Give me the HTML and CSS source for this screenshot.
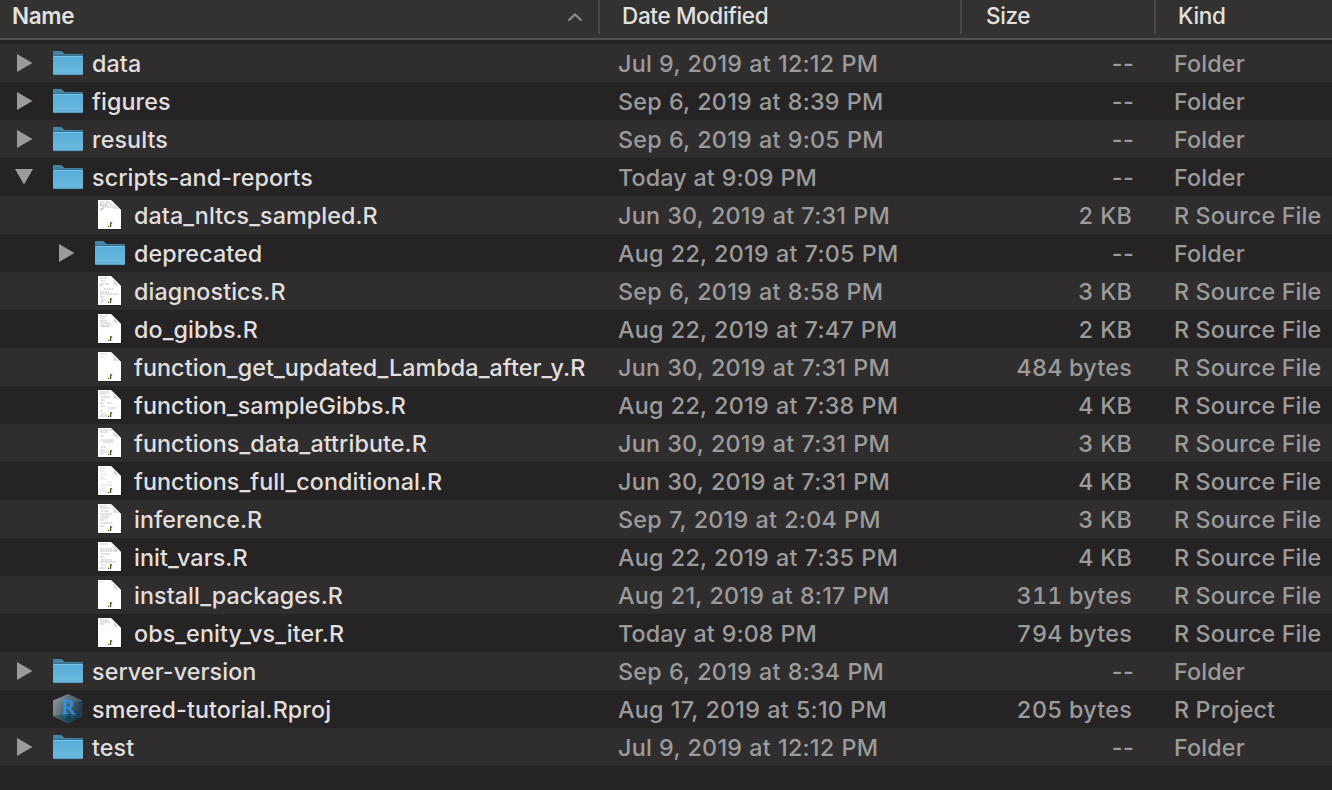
FILE: index.html
```
<!DOCTYPE html>
<html lang="en">
<head>
<meta charset="utf-8">
<title>Files</title>
<link rel="stylesheet" href="styles.css">
</head>
<body>
<svg class="defs" width="0" height="0" aria-hidden="true">
  <defs>
    <linearGradient id="front" x1="0" y1="0" x2="0" y2="1"><stop offset="0" stop-color="#56acd6"/><stop offset="1" stop-color="#6dbadf"/></linearGradient>
    <linearGradient id="fold" x1="0" y1="1" x2="1" y2="0"><stop offset="0" stop-color="#fff"/><stop offset=".35" stop-color="#d4d4d4"/><stop offset=".5" stop-color="#fafafa"/></linearGradient>
    <linearGradient id="cube" x1="0" y1="0" x2="1" y2=".35"><stop offset="0" stop-color="#929c9e"/><stop offset=".5" stop-color="#536972"/><stop offset="1" stop-color="#203e50"/></linearGradient>
    <linearGradient id="cubeBottom" x1="0" y1="0" x2="1" y2="0"><stop offset="0" stop-color="#59666b"/><stop offset=".5" stop-color="#174353"/><stop offset="1" stop-color="#233c49"/></linearGradient>
    <symbol id="right" viewBox="0 0 16 18"><path d="M0 0L15.500 9L0 18Z" fill="#9b9b9b"/></symbol>
    <symbol id="down" viewBox="0 0 18 16"><path d="M0 0H18L9 15.500Z" fill="#9b9b9b"/></symbol>
    <symbol id="folder" viewBox="0 0 32 26">
      <path d="M1 10V2Q1 1 2 1H8.500Q9.600 1 10.500 2L12 3.500Q12.600 4 13.500 4H30Q31 4 31 5V10Z" fill="#4685a5"/>
      <path d="M1 5.500H31V23.500Q31 25 29.500 25H2.500Q1 25 1 23.500Z" fill="url(#front)"/>
      <path d="M1 5.500H31" stroke="#356f8e"/>
      <path d="M1.500 6.500H30.500" stroke="#7bc5e8"/>
      <path d="M1.500 22.500H30.500" stroke="#60aed3" stroke-width=".7"/>
      <path d="M2 24.700H30" stroke="#42819f" stroke-width=".7"/>
    </symbol>
    <symbol id="page" viewBox="0 0 24 30">
      <path d="M.5 29.400H23.500" stroke="#111" stroke-opacity=".5"/>
      <path d="M0 0H13L23 10V29H0Z" fill="#fff"/>
      <path d="M13 0L23 10Q19 8 15.500 9Q16 4 13 0Z" fill="url(#fold)"/>
      <path d="M10 26.400H11.200M12.600 27V22.900H14.200" stroke="#55510a" fill="none" stroke-width="1.300"/>
    </symbol>
    <symbol id="rproj" viewBox="0 0 32 32">
      <path d="M16 1L30.500 7.500V23L16 30.500L1 23V7.500Z" fill="url(#cube)"/>
      <path d="M16 1L30.500 7.500L16 11L1 7.500Z" fill="#9aa6a8" fill-opacity=".2"/>
      <path d="M1 23L16 20.500L30.500 23L16 30.500Z" fill="url(#cubeBottom)"/>
      <path d="M11 22.500H15M20 22.500H23M13.500 22L12.500 25M18 22L21 25" stroke="#1e6c91" fill="none"/>
      <text x="10" y="20.800" class="cube-letter">R</text>
    </symbol>
  </defs>
</svg>
<div class="browser">
  <div class="header">
    <div class="h-name"><span>Name</span><svg class="sort" viewBox="0 0 16 10"><path d="M1.500 8.500L8 2.500L14.500 8.500" fill="none" stroke="#8c8b8a" stroke-width="2.300"/></svg></div>
    <div class="h-date">Date Modified</div>
    <div class="h-size">Size</div>
    <div class="h-kind">Kind</div>
  </div>
  <div class="list">
    <div class="row"><div class="name"><svg class="arrow"><use href="#right"/></svg><svg class="folder"><use href="#folder"/></svg><span>data</span></div><div class="date">Jul 9, 2019 at 12:12 PM</div><div class="size none">--</div><div class="kind">Folder</div></div>
    <div class="row"><div class="name"><svg class="arrow"><use href="#right"/></svg><svg class="folder"><use href="#folder"/></svg><span>figures</span></div><div class="date">Sep 6, 2019 at 8:39 PM</div><div class="size none">--</div><div class="kind">Folder</div></div>
    <div class="row"><div class="name"><svg class="arrow"><use href="#right"/></svg><svg class="folder"><use href="#folder"/></svg><span>results</span></div><div class="date">Sep 6, 2019 at 9:05 PM</div><div class="size none">--</div><div class="kind">Folder</div></div>
    <div class="row"><div class="name"><svg class="arrow open"><use href="#down"/></svg><svg class="folder"><use href="#folder"/></svg><span>scripts-and-reports</span></div><div class="date today">Today at 9:09 PM</div><div class="size none">--</div><div class="kind">Folder</div></div>
    <div class="row"><div class="name file"><svg class="page" viewBox="0 0 24 30"><use href="#page"/><path class="code" d="M2 2H7M8 2H12M2 4H14M2 5.500H9M4 7H15M3 8.500H6M2 10H5"/></svg><span>data_nltcs_sampled.R</span></div><div class="date">Jun 30, 2019 at 7:31 PM</div><div class="size">2 KB</div><div class="kind">R Source File</div></div>
    <div class="row"><div class="name nested"><svg class="arrow"><use href="#right"/></svg><svg class="folder"><use href="#folder"/></svg><span>deprecated</span></div><div class="date">Aug 22, 2019 at 7:05 PM</div><div class="size none">--</div><div class="kind">Folder</div></div>
    <div class="row"><div class="name file"><svg class="page" viewBox="0 0 24 30"><use href="#page"/><path class="code" d="M2 2H9M3 5H7M2 8H6M7 8H12M2 10H5M6 13H16M2 16H12M2 18H21M2 21H6M3 24H8M3 26H6"/></svg><span>diagnostics.R</span></div><div class="date">Sep 6, 2019 at 8:58 PM</div><div class="size">3 KB</div><div class="kind">R Source File</div></div>
    <div class="row"><div class="name file"><svg class="page" viewBox="0 0 24 30"><use href="#page"/><path class="code" d="M2 2H9M3 4H7M2 7H9M3 9H12M2 11H8M9 11H14M4 12.500H11"/></svg><span>do_gibbs.R</span></div><div class="date">Aug 22, 2019 at 7:47 PM</div><div class="size">2 KB</div><div class="kind">R Source File</div></div>
    <div class="row"><div class="name file"><svg class="page" viewBox="0 0 24 30"><use href="#page"/><path class="code faint" d="M2 2H9M2 5H6"/></svg><span>function_get_updated_Lambda_after_y.R</span></div><div class="date">Jun 30, 2019 at 7:31 PM</div><div class="size">484 bytes</div><div class="kind">R Source File</div></div>
    <div class="row"><div class="name file"><svg class="page" viewBox="0 0 24 30"><use href="#page"/><path class="code" d="M2 2H12M2 4H8M3 7H12M3 10H7M9 13H14M2 13H6M3 16H7M10 18H18M2 21H5M3 24H8M2 26H10"/></svg><span>function_sampleGibbs.R</span></div><div class="date">Aug 22, 2019 at 7:38 PM</div><div class="size">4 KB</div><div class="kind">R Source File</div></div>
    <div class="row"><div class="name file"><svg class="page" viewBox="0 0 24 30"><use href="#page"/><path class="code" d="M2 2H14M2 4H10M3 8H6M3 12H15M5 14H16M3 19H8M2 22H7M3 24H9M2 26H5"/></svg><span>functions_data_attribute.R</span></div><div class="date">Jun 30, 2019 at 7:31 PM</div><div class="size">3 KB</div><div class="kind">R Source File</div></div>
    <div class="row"><div class="name file"><svg class="page" viewBox="0 0 24 30"><use href="#page"/><path class="code faint" d="M2 2H8M2 5H7M3 8H9M2 11H6M3 13H8M9 16H14M2 19H15M3 22H8M2 25H9"/></svg><span>functions_full_conditional.R</span></div><div class="date">Jun 30, 2019 at 7:31 PM</div><div class="size">4 KB</div><div class="kind">R Source File</div></div>
    <div class="row"><div class="name file"><svg class="page" viewBox="0 0 24 30"><use href="#page"/><path class="code" d="M2 2H8M2 4H12M3 7H11M2 10H14M4 12H12M3 14H10M2 16H7M3 19H14M2 22H6"/></svg><span>inference.R</span></div><div class="date">Sep 7, 2019 at 2:04 PM</div><div class="size">3 KB</div><div class="kind">R Source File</div></div>
    <div class="row"><div class="name file"><svg class="page" viewBox="0 0 24 30"><use href="#page"/><path class="code" d="M2 2H10M2 7H14M2 9H19M3 12H12M2 15H7M3 18H14M2 20H18M3 23H8M2 26H8"/></svg><span>init_vars.R</span></div><div class="date">Aug 22, 2019 at 7:35 PM</div><div class="size">4 KB</div><div class="kind">R Source File</div></div>
    <div class="row"><div class="name file"><svg class="page" viewBox="0 0 24 30"><use href="#page"/><path class="code faint" d="M2 2H7"/></svg><span>install_packages.R</span></div><div class="date">Aug 21, 2019 at 8:17 PM</div><div class="size">311 bytes</div><div class="kind">R Source File</div></div>
    <div class="row"><div class="name file"><svg class="page" viewBox="0 0 24 30"><use href="#page"/><path class="code" d="M2 2H11M3 4H12M2 6H7"/></svg><span>obs_enity_vs_iter.R</span></div><div class="date today">Today at 9:08 PM</div><div class="size">794 bytes</div><div class="kind">R Source File</div></div>
    <div class="row"><div class="name"><svg class="arrow"><use href="#right"/></svg><svg class="folder"><use href="#folder"/></svg><span>server-version</span></div><div class="date">Sep 6, 2019 at 8:34 PM</div><div class="size none">--</div><div class="kind">Folder</div></div>
    <div class="row"><div class="name project"><svg class="cube"><use href="#rproj"/></svg><span>smered-tutorial.Rproj</span></div><div class="date">Aug 17, 2019 at 5:10 PM</div><div class="size">205 bytes</div><div class="kind">R Project</div></div>
    <div class="row"><div class="name"><svg class="arrow"><use href="#right"/></svg><svg class="folder"><use href="#folder"/></svg><span>test</span></div><div class="date">Jul 9, 2019 at 12:12 PM</div><div class="size none">--</div><div class="kind">Folder</div></div>
  </div>
</div>
</body>
</html>
```
FILE: styles.css
```
* { box-sizing: border-box; }
body { margin: 0; background: #252324; }
.defs { position: absolute; }
.browser {
  width: 1332px; height: 790px; overflow: hidden;
  background: #252324; color: #e0dfdf;
  font: 500 23.3px/38px Inter, "Liberation Sans", sans-serif;
}
.header, .row { display: grid; grid-template-columns: 598px 362px 194px 178px; }
.header {
  height: 40px; background: #333230; font-size: 22.5px; line-height: 32px; letter-spacing: -.35px;
  border-bottom: 2px solid #504f4f; color: #e2e1e0;
}
.header > div { height: 34px; }
.header > .h-name { height: 32px; }
.h-name { display: flex; justify-content: space-between; align-items: center; padding: 0 15px 0 12px; font-weight: 600; }
.sort { width: 16px; height: 10px; margin-top: 1px; }
.h-date, .h-size, .h-kind { border-left: 2px solid #484746; padding-left: 22px; }
.header > .h-size { padding-left: 24px; }
.list { padding-top: 4px; }
.row { height: 38px; }
.row:nth-child(odd) { background: #2f2d2e; }
.name { display: flex; align-items: center; height: 38px; padding-left: 17px; white-space: nowrap; letter-spacing: .08px; }
.name span { padding-top: 2px; }
.name.nested { padding-left: 59px; }
.name.file { padding-left: 98px; }
.name.project { padding-left: 52px; }
.arrow { width: 16px; height: 18px; margin-right: 19px; flex: none; }
.arrow.open { width: 18px; height: 16px; margin: 0 19px 0 -2px; }
.folder { width: 32px; height: 26px; margin-right: 8px; flex: none; }
.page { width: 24px; height: 30px; margin-right: 12px; flex: none; }
.cube { width: 32px; height: 32px; margin-right: 8px; flex: none; }
.code { stroke: #aaa; stroke-width: .8; stroke-dasharray: 2.500 .6 1.200 .5; fill: none; }
.code.faint { stroke: #ccc; }
.cube-letter { font: 400 20px "Liberation Serif", serif; letter-spacing: 0; fill: #2b94e8; stroke: #2b94e8; stroke-width: .5px; }
.date, .size, .kind { padding-top: 1px; height: 38px; color: #9c9b9b; white-space: nowrap; }
.date { padding-left: 20px; letter-spacing: .26px; word-spacing: .55px; }
.date.today { letter-spacing: .1px; }
.size { padding-right: 22px; text-align: right; font-variant-numeric: tabular-nums; letter-spacing: .25px; }
.size.none { padding-right: 20px; font-variant-numeric: normal; letter-spacing: .3px; }
.kind { padding-left: 20px; letter-spacing: .15px; }
```
